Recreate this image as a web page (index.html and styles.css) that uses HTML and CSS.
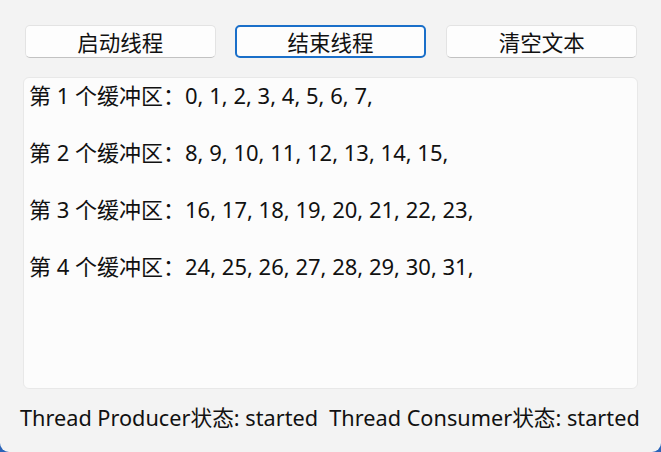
FILE: index.html
```html
<!DOCTYPE html>
<html lang="zh-CN">
<head>
<meta charset="utf-8">
<title>线程缓冲区</title>
<link rel="stylesheet" href="styles.css">
</head>
<body>
<div class="window">
  <div class="toolbar">
    <button class="btn">启动线程</button>
    <button class="btn btn-focus">结束线程</button>
    <button class="btn">清空文本</button>
  </div>
  <div class="textbox">
    <p class="line">第 1 个缓冲区：0, 1, 2, 3, 4, 5, 6, 7,</p>
    <p class="line">第 2 个缓冲区：8, 9, 10, 11, 12, 13, 14, 15,</p>
    <p class="line">第 3 个缓冲区：16, 17, 18, 19, 20, 21, 22, 23,</p>
    <p class="line">第 4 个缓冲区：24, 25, 26, 27, 28, 29, 30, 31,</p>
  </div>
  <div class="status">Thread Producer状态: started&nbsp; Thread Consumer状态: started</div>
</div>
</body>
</html>
```
FILE: styles.css
```css
html, body {
  margin: 0;
  padding: 0;
  background: #2a63b8;
}
.window {
  width: 661px;
  height: 452px;
  background: #f3f3f3;
  border-radius: 0 0 9px 9px;
  overflow: hidden;
  font-family: "Noto Sans", "Noto Sans CJK SC", sans-serif;
  color: #111;
  display: flex;
  flex-direction: column;
}
.toolbar {
  display: grid;
  grid-template-columns: repeat(3, 1fr);
  gap: 20px;
  padding: 25px 24px 0 25px;
}
.btn {
  height: 33px;
  margin: 0;
  padding: 0;
  background: #fdfdfd;
  border: 1px solid #e3e3e3;
  border-bottom-color: #c2c2c2;
  border-radius: 5px;
  font-family: "Noto Sans CJK SC", sans-serif;
  font-size: 21.5px;
  color: #111;
  line-height: 1;
}
.btn-focus {
  border: 2px solid #1a6fc9;
  margin-left: -1px;
}
.textbox {
  margin: 19px 23px 0 23px;
  height: 312px;
  box-sizing: border-box;
  background: #fcfcfc;
  border: 1px solid #e8e8e8;
  border-radius: 6px;
  padding: 3px 5px;
}
.line {
  margin: 0 0 28.5px 0;
  font-size: 22px;
  line-height: 28.5px;
  white-space: pre;
}
.status {
  padding: 15px 0 0 20px;
  font-size: 21.7px;
  line-height: 28px;
  white-space: nowrap;
}
```
